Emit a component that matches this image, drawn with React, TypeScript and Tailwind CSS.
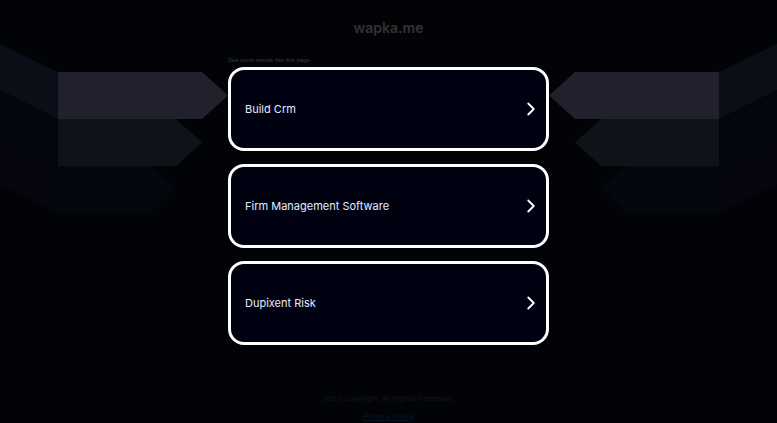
import { ChevronRight } from "lucide-react";

const results = ["Build Crm", "Firm Management Software", "Dupixent Risk"];

// One side of the backdrop, the other side is mirrored
function Arrows() {
  return (
    <>
      <path d="M0 44 L58 72 V119 L0 90 Z" fill="#0b0e16" />
      <path d="M0 90 L58 119 V166 L0 137 Z" fill="#03060e" />
      <path d="M0 137 L58 166 V213 L0 184 Z" fill="#05050d" />
      <path d="M58 72 H202 L228 95.500 L202 119 H58 Z" fill="#20212c" />
      <path d="M58 119 H176 L202 142.500 L176 166 H58 Z" fill="#0f1219" />
      <path d="M58 166 H151 L176 189 L151 213 H58 Z" fill="#03070e" />
      <path d="M0 286 L58 260 H101 L126 283 L101 307 H58 L0 333 Z" fill="#010206" />
    </>
  );
}

function Backdrop() {
  return (
    <svg
      className="absolute inset-0 h-full w-full"
      viewBox="0 0 777 423"
      preserveAspectRatio="xMidYMin slice"
      aria-hidden="true"
    >
      <Arrows />
      <g transform="translate(777 0) scale(-1 1)">
        <Arrows />
      </g>
    </svg>
  );
}

export default function App() {
  return (
    <div className="relative min-h-screen overflow-hidden bg-[#020307] font-['Liberation_Sans',Arial,sans-serif]">
      <Backdrop />

      <div className="relative mx-auto flex w-full max-w-[321px] flex-col">
        <h1 className="pt-4 text-center font-[Inter,sans-serif] text-[14px] leading-6 font-semibold text-[#333333]">
          wapka.me
        </h1>

        <main className="pt-4">
          <p className="text-[6px] leading-[8px] text-[#3a3a46]">See more results like this page</p>
          <ul className="mt-[3px] flex flex-col gap-[13px] font-[Inter,sans-serif]">
            {results.map((title) => (
              <li key={title}>
                <a
                  href="#"
                  className="flex items-center justify-between rounded-2xl border-3 border-white bg-[#000212] py-8 pr-1 pl-[14px] text-[11px] leading-[14px] text-[#e4ecff] hover:bg-[#0a0f2a]"
                >
                  {title}
                  <ChevronRight size={22} strokeWidth={2} className="-my-1 text-white" />
                </a>
              </li>
            ))}
          </ul>
        </main>

        <footer className="flex flex-col items-center gap-2 pt-[49px] text-[8px] leading-[10px] text-[#12141b]">
          <p>2023 Copyright. All Rights Reserved.</p>
          <a href="#" className="text-[#0a1524] underline">
            Privacy Policy
          </a>
        </footer>
      </div>
    </div>
  );
}
